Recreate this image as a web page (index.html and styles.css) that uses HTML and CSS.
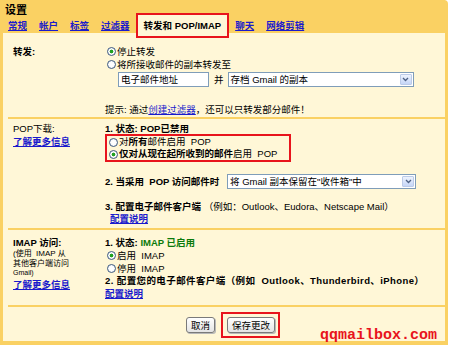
FILE: index.html
```html
<!DOCTYPE html>
<html lang="zh-CN">

<head>
    <meta charset="UTF-8">
    <title>设置 - 转发和 POP/IMAP</title>
    <link rel="stylesheet" href="styles.css">
</head>

<body>

    <div class="frame">
        <div class="header">
            <div class="title">设置</div>
            <div class="tabs">
                <a class="tab" href="#">常规</a>
                <a class="tab" href="#">帐户</a>
                <a class="tab" href="#">标签</a>
                <a class="tab" href="#">过滤器</a>
                <span class="tab active">转发和 POP/IMAP</span>
                <a class="tab" href="#">聊天</a>
                <a class="tab" href="#">网络剪辑</a>
            </div>
        </div>

        <div class="content">
            <!-- forwarding -->
            <div class="section fwd">
                <div class="label"><b>转发:</b></div>
                <div class="body">
                    <div class="opt"><span class="radio on"></span>停止转发</div>
                    <div class="opt"><span class="radio"></span>将所接收邮件的副本转发至</div>
                    <div class="fwd-row">
                        <span class="input">电子邮件地址</span>
                        <span class="and">并</span>
                        <span class="select wide">存档 Gmail 的副本<span class="arrow"><svg width="7" height="5" viewBox="0 0 7 5"><path d="M1 1 L3.5 3.5 L6 1" fill="none" stroke="#4d6185" stroke-width="1.3"/></svg></span></span>
                    </div>
                    <div class="tip">提示: 通过<a href="#">创建过滤器</a>，还可以只转发部分邮件！</div>
                </div>
            </div>

            <!-- pop -->
            <div class="section pop">
                <div class="label">
                    <div>POP下载:</div>
                    <a href="#" class="more">了解更多信息</a>
                </div>
                <div class="body">
                    <div class="step"><b>1. 状态: POP已禁用</b></div>
                    <div class="marked">
                        <div class="opt"><span class="radio"></span>对<b>所有</b>邮件启用 &nbsp;POP</div>
                        <div class="opt"><span class="radio on"></span><b>仅对从现在起所收到的邮件</b>启用 &nbsp;POP</div>
                    </div>
                    <div class="pop-row">
                        <b>2. 当采用 &nbsp;POP 访问邮件时</b>
                        <span class="select pop-select">将 Gmail 副本保留在"收件箱"中<span class="arrow"><svg width="7" height="5" viewBox="0 0 7 5"><path d="M1 1 L3.5 3.5 L6 1" fill="none" stroke="#4d6185" stroke-width="1.3"/></svg></span></span>
                    </div>
                    <div class="step client"><b>3. 配置电子邮件客户端</b> （例如：Outlook、Eudora、Netscape Mail）</div>
                    <a href="#" class="howto indent">配置说明</a>
                </div>
            </div>

            <!-- imap -->
            <div class="section imap">
                <div class="label">
                    <div><b>IMAP 访问:</b></div>
                    <div class="small">(使用 &nbsp;IMAP 从</div>
                    <div class="small">其他客户端访问</div>
                    <div class="tiny">Gmail)</div>
                    <a href="#" class="more">了解更多信息</a>
                </div>
                <div class="body">
                    <div class="step"><b>1. 状态: <span class="green">IMAP 已启用</span></b></div>
                    <div class="opt"><span class="radio on"></span>启用 &nbsp;IMAP</div>
                    <div class="opt"><span class="radio"></span>停用 &nbsp;IMAP</div>
                    <div class="step spaced"><b>2. 配置您的电子邮件客户端（例如 &nbsp;Outlook、Thunderbird、iPhone）</b></div>
                    <a href="#" class="howto">配置说明</a>
                </div>
            </div>

            <div class="actions">
                <button class="btn">取消</button>
                <span class="marked save">
                    <button class="btn">保存更改</button>
                </span>
            </div>
        </div>

        <div class="watermark">qqmailbox.com</div>
    </div>

</body>

</html>
```

FILE: styles.css
```css
body {
    margin: 0;
    background-color: #fff;
    font-family: 'Liberation Sans', 'Noto Sans CJK SC', sans-serif;
    font-size: 9.5px;
    color: #000;
}

a {
    color: #1a1acc;
}

.frame {
    position: relative;
    width: 448px;
    height: 345px;
    box-sizing: border-box;
    border: 3px solid #fad163;
    border-top: none;
    border-bottom-width: 4px;
    border-top-right-radius: 4px;
    display: flex;
    flex-direction: column;
}

.header {
    height: 33px;
    flex-shrink: 0;
    background-color: #fad163;
}

.title {
    padding: 4px 0 0 2px;
    line-height: 13px;
    font-size: 11px;
    font-weight: bold;
}

.tabs {
    display: flex;
    margin: -4px 0 0 -1px;
}

.tab {
    padding: 2px 6px 0;
    line-height: 21px;
    font-weight: bold;
    white-space: nowrap;
}

.tab.active {
    position: relative;
    z-index: 2;
    padding: 0 6px;
    height: 21px;
    border: 2px solid #e8141c;
    background-color: #fff7d7;
    color: #000;
}

.content {
    flex: 1;
    background-color: #fff7d7;
}

.section {
    display: grid;
    grid-template-columns: 97px 1fr;
    margin-left: 5px;
    border-bottom: 2px solid #fad163;
    line-height: 13px;
}

.label {
    padding-left: 5px;
}

.fwd {
    padding: 12px 0 1px;
}

.pop {
    padding: 3px 0 3px;
}

.imap {
    padding: 6px 0 5px;
}

.opt {
    display: flex;
    align-items: center;
    white-space: nowrap;
}

.radio {
    width: 7px;
    height: 7px;
    margin: 0 1px 0 2px;
    border: 1px solid #3e5a80;
    border-radius: 50%;
    background: radial-gradient(circle, #ffffff 40%, #dde4ee 100%);
    flex-shrink: 0;
}

.radio.on {
    background: radial-gradient(circle, #21a121 0, #21a121 1.6px, #ffffff 2.2px, #dde4ee 100%);
}

.fwd-row {
    display: flex;
    align-items: center;
    margin: 0 0 0 13px;
    height: 16px;
}

.input {
    width: 87px;
    height: 13px;
    line-height: 13px;
    padding-left: 2px;
    background-color: #fff;
    border: 1px solid #7f9db9;
    box-sizing: content-box;
}

.and {
    margin: 0 4px 0 5px;
}

.select {
    position: relative;
    height: 13px;
    line-height: 13px;
    padding-left: 2px;
    background-color: #fff;
    border: 1px solid #7f9db9;
    white-space: nowrap;
}

.select.wide {
    width: 182px;
}

.arrow {
    position: absolute;
    right: 1px;
    top: 1px;
    width: 12px;
    height: 11px;
    border: 1px solid #bccbe8;
    border-radius: 1px;
    box-sizing: border-box;
    background: linear-gradient(#eef3fd, #c6d6f7);
    display: flex;
    align-items: center;
    justify-content: center;
}

.tip {
    margin-top: 16px;
    white-space: nowrap;
}

.more {
    display: inline-block;
    line-height: 11px;
    font-weight: bold;
}

.marked {
    border: 2px solid #e8141c;
    line-height: 12px;
    width: 182px;
    margin-top: -1px;
}

.pop-row {
    display: flex;
    align-items: center;
    justify-content: space-between;
    width: 311px;
    height: 16px;
    margin-top: 11px;
    white-space: nowrap;
}

.pop-select {
    width: 185px;
}

.client {
    margin-top: 12px;
    line-height: 11px;
    white-space: nowrap;
}

.howto {
    display: inline-block;
    line-height: 11px;
    font-weight: bold;
}

.howto.indent {
    margin-left: 5px;
}

.small {
    font-size: 8px;
    line-height: 9.5px;
}

.tiny {
    font-size: 7px;
    line-height: 9.5px;
}

.green {
    color: #0b7a0b;
}

.spaced {
    line-height: 12px;
    white-space: nowrap;
    letter-spacing: 0.4px;
}

.actions {
    display: flex;
    justify-content: center;
    align-items: center;
    gap: 6px;
    padding: 5px 0 0 18px;
}

.save {
    width: auto;
    margin: 0;
    padding: 3px 3px 3px 4px;
    line-height: normal;
}

.btn {
    height: 16px;
    padding: 0 4px;
    font-family: inherit;
    font-size: 9.5px;
    border: 1px solid #7a7a7a;
    border-radius: 3px;
    background: linear-gradient(#ffffff, #e4e4e4);
    box-shadow: 1px 1px 0 #b8b8b8;
    color: #000;
}

.watermark {
    position: absolute;
    z-index: 3;
    left: 317px;
    top: 328px;
    font-family: 'Liberation Mono', monospace;
    font-size: 15px;
    line-height: 15px;
    font-weight: bold;
    color: #e8141c;
}
```
